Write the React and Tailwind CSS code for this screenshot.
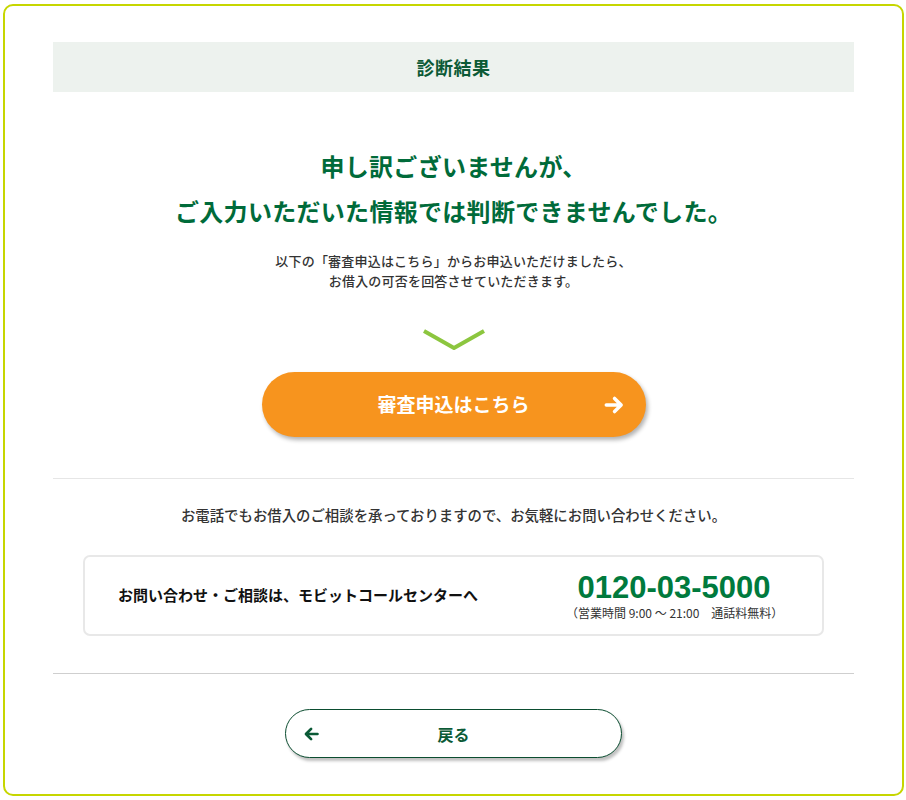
const jp = { fontFamily: '"Noto Sans CJK JP", "Noto Sans", sans-serif' };

function Arrow({ dir = 'right', className }) {
  const d = dir === 'right' ? 'M3 10h13M10.5 4l6 6-6 6' : 'M17 10H4M9.5 4l-6 6 6 6';
  return (
    <svg viewBox="0 0 20 20" className={className} fill="none" stroke="currentColor" strokeWidth="3.2" strokeLinecap="round" strokeLinejoin="round">
      <path d={d} />
    </svg>
  );
}

export default function App() {
  return (
    <div className="bg-white pl-[3px] pr-[2px] pt-[4px] pb-[3px]" style={jp}>
      <div className="border-2 border-[#c6d600] rounded-[10px] px-[48px] pt-[36px] pb-[36px]">
        {/* title bar */}
        <div className="bg-[#edf2ee] h-[50px] flex items-center justify-center">
          <h1 className="text-[18px] font-bold text-[#0b5a36] tracking-[0.5px]">診断結果</h1>
        </div>

        <div className="mt-[51px] text-center text-[24px] leading-[45px] font-bold text-[#006b3a] tracking-[0.3px]">
          <p>申し訳ございませんが、</p>
          <p>ご入力いただいた情報では判断できませんでした。</p>
        </div>

        <div className="mt-[18px] text-center text-[13px] leading-[20px] font-medium text-[#333] tracking-[0.2px]">
          <p>以下の「審査申込はこちら」からお申込いただけましたら、</p>
          <p>お借入の可否を回答させていただきます。</p>
        </div>

        <div className="mt-[37px] flex justify-center">
          <svg viewBox="0 0 62 22" className="w-[62px] h-[22px]" fill="none" stroke="#8cc63f" strokeWidth="4">
            <path d="M1 3l30 17 30-17" />
          </svg>
        </div>

        <div className="mt-[22px] flex justify-center">
          <button className="relative w-[384px] h-[65px] rounded-full bg-[#f7941e] text-white shadow-[2px_3px_4px_rgba(0,0,0,0.3)] flex items-center justify-center">
            <span className="text-[19px] font-bold">審査申込はこちら</span>
            <Arrow className="absolute right-[21px] top-1/2 -translate-y-1/2 w-[22px] h-[22px]" />
          </button>
        </div>

        <div className="mt-[41px] border-t border-[#e6e6e6]" />

        <p className="mt-[26px] text-center text-[14.4px] leading-[20px] font-medium text-[#333]">
          お電話でもお借入のご相談を承っておりますので、お気軽にお問い合わせください。
        </p>

        <div className="mt-[30px] mx-[30px] h-[81px] border-2 border-[#e8e8e8] rounded-[7px] flex items-center pl-[33px] pr-[40px] justify-between">
          <p className="text-[15px] font-bold text-[#111]">お問い合わせ・ご相談は、モビットコールセンターへ</p>
          <div className="w-[216px] flex flex-col items-center">
            <span className="text-[31px] leading-[34px] font-bold text-[#007a3d]" style={{ fontFamily: '"Liberation Sans", Arial, sans-serif' }}>
              0120-03-5000
            </span>
            <span className="text-[12px] leading-[16px] text-[#333]">（営業時間 9:00 ～ 21:00　通話料無料）</span>
          </div>
        </div>

        <div className="mt-[37px] border-t border-[#cfcfcf]" />

        <div className="mt-[35px] flex justify-center">
          <button className="relative w-[337px] h-[49px] rounded-full bg-white border border-[#0b4d30] text-[#0b5a36] shadow-[2px_3px_3px_rgba(0,0,0,0.25)] flex items-center justify-center">
            <Arrow dir="left" className="absolute left-[17px] top-1/2 -translate-y-1/2 w-[17px] h-[17px]" />
            <span className="text-[16px] font-bold">戻る</span>
          </button>
        </div>
      </div>
    </div>
  );
}
